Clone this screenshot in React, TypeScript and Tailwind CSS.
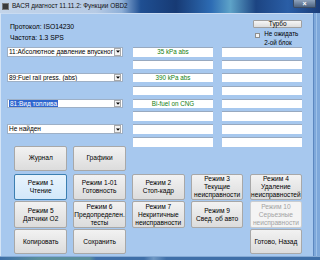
import React from "react";

const FONT = "font-['Liberation_Sans',Arial,sans-serif]";

function Field({ text }: { text?: string }) {
  return (
    <div className="h-[9.5px] bg-white border-t border-[#98a9bf] flex items-center justify-center text-[6.3px] leading-none text-[#118011] whitespace-nowrap">
      {text}
    </div>
  );
}

function Drop({ text, selected }: { text: string; selected?: boolean }) {
  return (
    <div className="h-[9.5px] bg-white border border-[#9eb0c6] flex items-center">
      <div className="flex-1 min-w-0 pl-[1px] overflow-hidden flex items-center">
        <span
          className={
            selected
              ? "bg-[#2f66cf] text-white text-[6.5px] leading-[7.5px] whitespace-nowrap px-[1px]"
              : "text-black text-[6.5px] leading-[7.5px] whitespace-nowrap"
          }
        >
          {text}
        </span>
      </div>
      <div className="w-[7px] h-[7.5px] mr-[0.5px] border border-[#a9a9a9] bg-[#f2f2f2] flex items-center justify-center">
        <svg width="4" height="3" viewBox="0 0 4 3">
          <path d="M0 0.5 L4 0.5 L2 2.8 Z" fill="#000" />
        </svg>
      </div>
    </div>
  );
}

type V = "n" | "f" | "d";
function Btn({ lines, v = "n", h = "h-[26.7px]" }: { lines: string[]; v?: V; h?: string }) {
  const cls =
    v === "f"
      ? "bg-linear-to-b from-[#e8f4fd] to-[#d2e8fa] border-[#3c7fb1] text-black"
      : v === "d"
      ? "bg-[#f4f4f4] border-[#c9cdd1] text-[#a3a3a3]"
      : "bg-linear-to-b from-[#f2f2f2] to-[#dcdcdc] border-[#a8a8a8] text-black";
  return (
    <div className={`${h} border rounded-[2px] flex flex-col items-center justify-center text-center text-[6.6px] leading-[8px] ${cls}`}>
      {lines.map((l, i) => (
        <span key={i} className="whitespace-nowrap">
          {l}
        </span>
      ))}
    </div>
  );
}

export default function App() {
  return (
    <div className={`w-[320px] h-[260px] overflow-hidden flex flex-col bg-[#a7c8ee] ${FONT}`}>
      {/* title bar */}
      <div className="h-[13px] shrink-0 flex items-center bg-[linear-gradient(90deg,#c3d4e9_0%,#b6cae4_30%,#8fb0d8_38%,#1f4f92_44%,#173a74_55%,#2d6cb4_66%,#5ea3c8_72%,#1c4482_80%,#2a5ea6_90%,#1a3c78_100%)]">
        <div className="ml-[2px] w-[7px] h-[7px] bg-[#3a3a3a] border border-[#777]" />
        <span className="ml-[3px] text-[6.4px] leading-none text-[#111] whitespace-nowrap">
          ВАСЯ диагност 11.11.2: Функции OBD2
        </span>
        <div className="flex-1" />
        <div className="self-start mr-[4px] w-[23px] h-[8px] rounded-b-[2px] bg-linear-to-b from-[#8fa3bd] to-[#4e6482] border border-[#3b4b63] border-t-0 flex items-center justify-center text-white text-[7px] leading-none font-bold">
          ×
        </div>
      </div>
      {/* body */}
      <div className="flex-1 flex min-h-0">
        <div className="w-[1.5px] bg-[#d4e4f6]" />
        <div className="flex-1 flex flex-col pl-[5.5px] pr-[11px] border-t border-[#c9dbf1]">
          {/* top */}
          <div className="h-[33px] flex">
            <div className="flex-1 pt-[6.5px] pl-[3px] text-[6.8px] leading-[11px] text-black">
              <div>Протокол: ISO14230</div>
              <div>Частота: 1.3 SPS</div>
            </div>
            <div className="w-[49px] pt-[5.5px] flex flex-col">
              <div className="h-[9px] border border-[#a0a0a0] rounded-[1px] bg-linear-to-b from-[#f6f6f6] to-[#dddddd] flex items-center justify-center text-[6.5px] leading-none text-black">
                Турбо
              </div>
              <div className="flex mt-[2px] pl-[2px]">
                <div className="mt-[3px] w-[5px] h-[5px] border border-[#8e8f8f] bg-[#f4f4f4]" />
                <div className="ml-[4px] text-[6.3px] leading-[8.5px] text-black">
                  <div>Не ожидать</div>
                  <div>2-ой блок</div>
                </div>
              </div>
            </div>
          </div>
          {/* fields */}
          <div className="flex">
            <div className="w-[116px] flex flex-col gap-[3.4px]">
              <Drop text="11:Абсолютное давление впускног" />
              <div className="h-[9.5px]" />
              <Drop text="89:Fuel rail press. (abs)" />
              <div className="h-[9.5px]" />
              <Drop text="81:Вид топлива" selected />
              <div className="h-[9.5px]" />
              <Drop text="Не найден" />
            </div>
            <div className="ml-[10px] w-[80px] flex flex-col gap-[3.4px]">
              <Field text="35 kPa abs" />
              <Field />
              <Field text="390 kPa abs" />
              <Field />
              <Field text="Bi-fuel on CNG" />
              <Field />
              <Field />
              <Field />
            </div>
            <div className="ml-[9px] w-[80px] flex flex-col gap-[3.4px]">
              <Field />
              <Field />
              <Field />
              <Field />
              <Field />
              <Field />
              <Field />
              <Field />
            </div>
          </div>
          {/* Журнал / Графики */}
          <div className="mt-[-0.5px] pl-[7.5px] grid grid-cols-[52.5px_52.5px] gap-x-[6.3px]">
            <Btn lines={["Журнал"]} h="h-[24.5px]" />
            <Btn lines={["Графики"]} h="h-[24.5px]" />
          </div>
          {/* modes */}
          <div className="mt-[3px] pl-[7.5px] grid grid-cols-[52.5px_52.5px_52.5px_52.5px_52.5px] gap-x-[6.3px] gap-y-[1px]">
            <Btn lines={["Режим 1", "Чтение"]} v="f" />
            <Btn lines={["Режим 1-01", "Готовность"]} />
            <Btn lines={["Режим 2", "Стоп-кадр"]} />
            <Btn lines={["Режим 3", "Текущие", "неисправности"]} />
            <Btn lines={["Режим 4", "Удаление", "неисправностей"]} />
            <Btn lines={["Режим 5", "Датчики O2"]} />
            <Btn lines={["Режим 6", "Предопределен.", "тесты"]} />
            <Btn lines={["Режим 7", "Некритичные", "неисправности"]} />
            <Btn lines={["Режим 9", "Свед. об авто"]} />
            <Btn lines={["Режим 10", "Серьезные", "неисправности"]} v="d" />
            <Btn lines={["Копировать"]} h="h-[25px]" />
            <Btn lines={["Сохранить"]} h="h-[25px]" />
            <div />
            <div />
            <Btn lines={["Готово, Назад"]} h="h-[25px]" />
          </div>
        </div>
        <div className="w-[7px] bg-[#7ea8da] border-l border-[#5d88c0] flex">
          <div className="ml-[2px] w-[1px] bg-[#9cc0e8]" />
        </div>
      </div>
      <div className="h-[4px] shrink-0 bg-[linear-gradient(90deg,#3f6fa8_0%,#5a8f9c_12%,#5a8f9c_28%,#3f6fa8_30%,#3f6fa8_45%,#6f98c4_48%,#3f6fa8_52%,#3f6fa8_100%)] border-t border-[#86abd6]" />
    </div>
  );
}
